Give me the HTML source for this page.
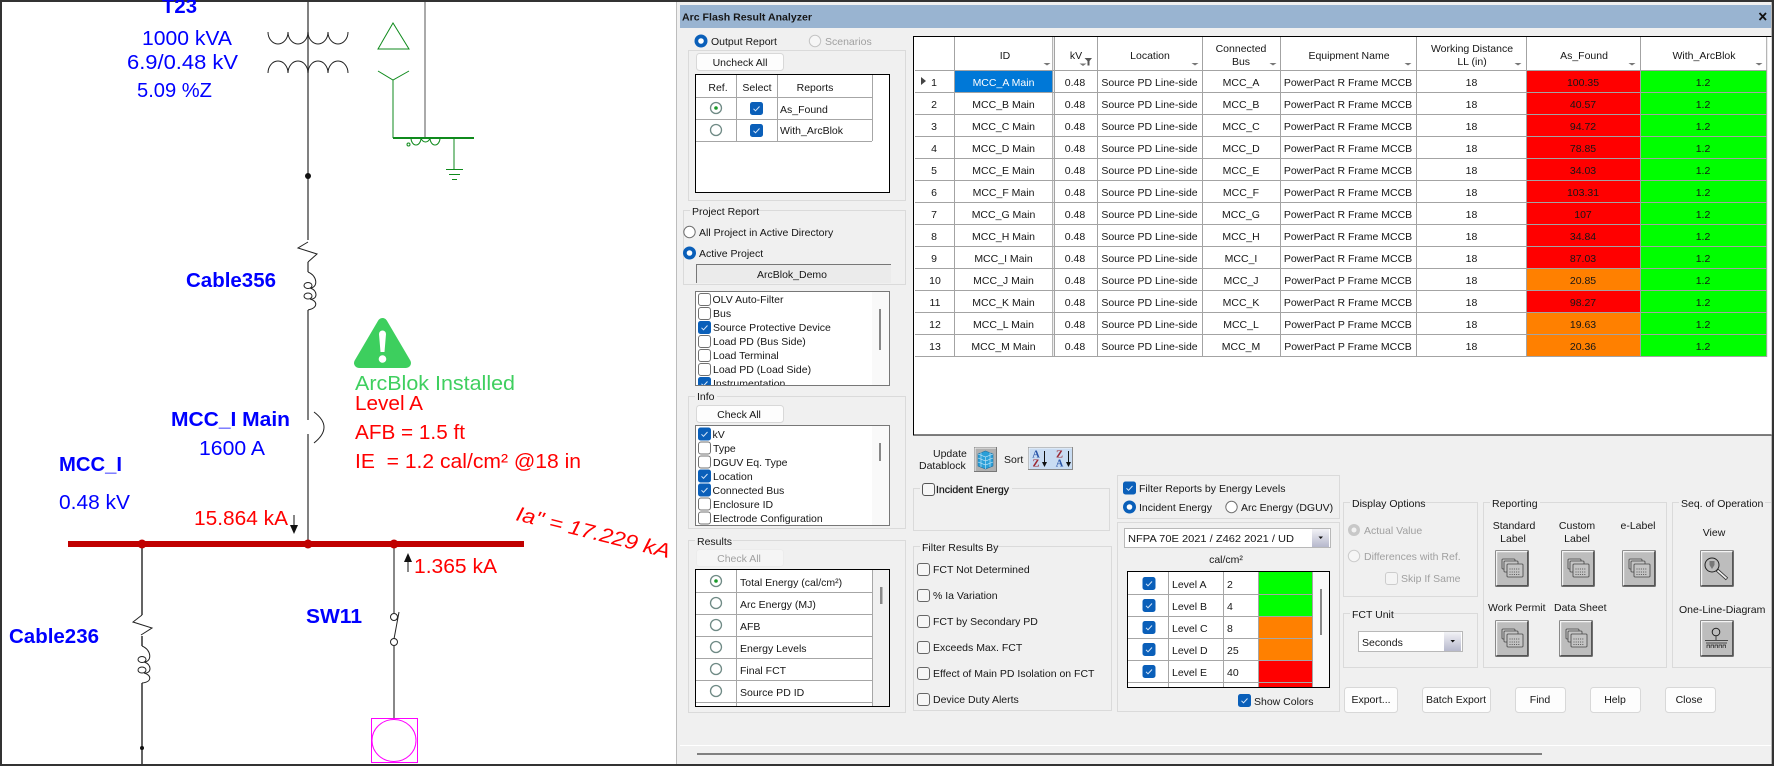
<!DOCTYPE html>
<html><head><meta charset="utf-8"><title>Arc Flash Result Analyzer</title>
<style>
html,body{margin:0;padding:0;background:#333;width:1774px;height:766px;overflow:hidden}
svg{display:block;position:absolute;left:0;top:0}
text{font-family:"Liberation Sans",sans-serif;font-size:10.5px;fill:#161616}
.d text{font-size:20.5px;fill:#0000ff}
.b{font-weight:bold}
.r text{fill:#ff0000}
.g{fill:#a2a2a2}
.gb{fill:none;stroke:#dadada}
.m{text-anchor:middle}
</style></head><body>
<svg width="1774" height="766" viewBox="0 0 1774 766" xmlns="http://www.w3.org/2000/svg">
<defs>
<g id="cb"><rect x="-6.5" y="-6.5" width="13" height="13" rx="2.5" fill="#0a5fb9"/><path d="M-3 0.3L-1 2.3L3 -2" fill="none" stroke="#d8e8fa" stroke-width="1"/></g>
<rect id="ub" x="-6" y="-6" width="12" height="12" rx="2.5" fill="#fff" stroke="#707070"/>
<g id="rb"><circle r="6.5" fill="#0a5fb9"/><circle r="2.8" fill="#fff"/></g>
<circle id="ru" r="5.7" fill="#fff" stroke="#707070"/>
<g id="rg"><circle r="5.5" fill="#fff" stroke="#6f8a85" stroke-width="1.3"/></g>
<g id="rs"><circle r="5.5" fill="#fff" stroke="#6f8a85" stroke-width="1.3"/><circle r="1.8" fill="#1a9a2a"/></g>
<path id="ar" d="M-3.5 0H3.5L0 2.5Z" fill="#777"/>
<g id="btn"><rect x="0" y="0" width="33" height="36" rx="1" fill="#bdbdbd" stroke="#6e6e6e"/><path d="M1 35V1H32" fill="none" stroke="#f4f4f4" stroke-width="1.4"/><path d="M32 1V35H1" fill="none" stroke="#555" stroke-width="1"/></g>
<g id="pg" fill="#c4c4c4" stroke="#444" stroke-width="0.8"><rect x="6.5" y="8.5" width="13" height="10" rx="1"/><rect x="8.5" y="10.5" width="14" height="11" rx="1"/><rect x="11.5" y="13.5" width="16" height="13" rx="1"/><path d="M14 18.5h10M14 21.5h10M14 24h10" stroke="#333" stroke-dasharray="1 1.2" fill="none"/></g>
</defs>

<!-- one-line diagram -->
<rect x="2" y="2" width="675" height="762" fill="#fff"/>
<g fill="none" stroke="#4a4a4a" stroke-width="1.4">
<path d="M308 2V240M308 262V272M308 310V420M308 434V541"/>
<path d="M425 2V138" stroke="#555" stroke-width="1"/>
<path d="M268 32a10 12 0 0 0 20 0a10 12 0 0 0 20 0a10 12 0 0 0 20 0a10 12 0 0 0 20 0M268 73a10 12 0 0 1 20 0a10 12 0 0 1 20 0a10 12 0 0 1 20 0a10 12 0 0 1 20 0" stroke="#222" stroke-width="1"/>
<path d="M308 242L298 248L317 254L308 262" stroke="#222" stroke-width="1"/>
<path d="M308 272C318 276 318 288 310 288C318 290 318 300 310 299C318 301 318 308 308 310" stroke="#222" stroke-width="1"/>
<ellipse cx="308" cy="285.5" rx="4" ry="3" stroke="#222" stroke-width="1"/><ellipse cx="308" cy="296" rx="4" ry="3" stroke="#222" stroke-width="1"/>
<path d="M314 412Q334 427 314 443" stroke="#222" stroke-width="1"/>
<path d="M142 547V615M142 636V646M142 683V764" stroke="#222"/>
<path d="M142 615L133 622L152 628L141 635" stroke="#222" stroke-width="1"/>
<path d="M142 646C152 650 152 662 144 662C152 664 152 674 144 673C152 675 152 682 142 683" stroke="#222" stroke-width="1"/>
<ellipse cx="142" cy="659.5" rx="4" ry="3" stroke="#222" stroke-width="1"/><ellipse cx="142" cy="670" rx="4" ry="3" stroke="#222" stroke-width="1"/>
<path d="M394 547V613M394 646V718" stroke="#555"/>
<ellipse cx="394" cy="617" rx="3.5" ry="3.5" stroke="#222" stroke-width="1"/><ellipse cx="394" cy="642" rx="3.5" ry="3.5" stroke="#222" stroke-width="1"/>
<path d="M399 612L394 639" stroke="#222" stroke-width="1"/>
</g>
<g fill="none" stroke="#0f8a1c" stroke-width="1">
<path d="M393 23L378 49H409Z"/>
<path d="M378 71L393 80L409 71M393 80V138" /><path d="M393 138H474" stroke-width="2"/>
<path d="M411 138a5 7 0 0 0 10 0a5 7 0 0 0 9 0a5 7 0 0 0 10 0"/>
<circle cx="408.5" cy="144.5" r="1.5"/>
<path d="M454 138V169M446 169.5H463M449 174.5H460M452 179.5H457"/>
</g>
<circle cx="308" cy="176" r="3" fill="#111"/><circle cx="142" cy="748" r="2" fill="#111"/>
<rect x="68" y="541" width="456" height="6" fill="#c00000"/>
<circle cx="142" cy="544" r="4.5" fill="#c00000"/><circle cx="308" cy="544" r="4.5" fill="#c00000"/><circle cx="394" cy="544" r="4.5" fill="#c00000"/>
<path d="M294 515V526" stroke="#111"/><path d="M290 525H298L294 534Z" fill="#111"/>
<path d="M408 562V572" stroke="#111"/><path d="M404 562H412L408 553Z" fill="#111"/>
<rect x="371.5" y="718.5" width="46" height="44" fill="none" stroke="#ff00ff"/><ellipse cx="394" cy="740.5" rx="22" ry="21" fill="none" stroke="#ff00ff"/>
<path d="M382.5 323L359 363H406Z" fill="#3dcf5e" stroke="#3dcf5e" stroke-width="10" stroke-linejoin="round"/>
<path d="M379 334a3.5 3.5 0 0 1 7 0L384.5 352H380.5Z" fill="#fff"/><circle cx="382.5" cy="359" r="3.8" fill="#fff"/>
<g class="d">
<text class="b" x="162" y="13" textLength="35" lengthAdjust="spacingAndGlyphs">T23</text>
<text x="142" y="45" textLength="90" lengthAdjust="spacingAndGlyphs">1000 kVA</text>
<text x="127" y="69" textLength="111" lengthAdjust="spacingAndGlyphs">6.9/0.48 kV</text>
<text x="137" y="97" textLength="75" lengthAdjust="spacingAndGlyphs">5.09 %Z</text>
<text class="b" x="186" y="287" textLength="90" lengthAdjust="spacingAndGlyphs">Cable356</text>
<text class="b" x="171" y="426" textLength="119" lengthAdjust="spacingAndGlyphs">MCC_I Main</text>
<text x="199" y="455" textLength="66" lengthAdjust="spacingAndGlyphs">1600 A</text>
<text class="b" x="59" y="471" textLength="63" lengthAdjust="spacingAndGlyphs">MCC_I</text>
<text x="59" y="509" textLength="71" lengthAdjust="spacingAndGlyphs">0.48 kV</text>
<text class="b" x="9" y="643" textLength="90" lengthAdjust="spacingAndGlyphs">Cable236</text>
<text class="b" x="306" y="623" textLength="56" lengthAdjust="spacingAndGlyphs">SW11</text>
<text x="355" y="390" textLength="160" lengthAdjust="spacingAndGlyphs" style="fill:#3fcf5f">ArcBlok Installed</text>
</g>
<g class="d r">
<text x="355" y="410" textLength="68" lengthAdjust="spacingAndGlyphs">Level A</text>
<text x="355" y="439" textLength="110" lengthAdjust="spacingAndGlyphs">AFB = 1.5 ft</text>
<text x="355" y="468" textLength="226" lengthAdjust="spacingAndGlyphs" style="white-space:pre">IE  = 1.2 cal/cm² @18 in</text>
<text x="194" y="525" textLength="94" lengthAdjust="spacingAndGlyphs">15.864 kA</text>
<text x="414" y="573" textLength="83" lengthAdjust="spacingAndGlyphs">1.365 kA</text>
<text transform="translate(515 520) rotate(14)" style="font-style:italic" textLength="158" lengthAdjust="spacingAndGlyphs">Ia" = 17.229 kA</text>
</g>

<!-- window -->
<rect x="677" y="2" width="1094.7" height="762" fill="#f0f0f0"/>
<path d="M676.5 2V764" stroke="#bdbdbd"/>
<rect x="680" y="5" width="1091" height="23" fill="#99b4d1"/>
<text x="682" y="20.5" style="font-weight:bold" textLength="130" lengthAdjust="spacingAndGlyphs">Arc Flash Result Analyzer</text>
<path d="M1759.5 13L1766 20M1766 13L1759.5 20" stroke="#111" stroke-width="1.8"/>
<path d="M680 745.5H1771" stroke="#fff"/><rect x="697" y="753" width="845" height="2" fill="#808080"/>

<!-- Output report -->
<use href="#rb" x="701" y="41"/><text x="711" y="45">Output Report</text>
<circle cx="815" cy="41" r="5.7" fill="#f6f6f6" stroke="#c4c4c4"/><text x="825" y="45" style="fill:#a0a0a0">Scenarios</text>
<rect class="gb" x="688.5" y="50.5" width="217" height="150"/>
<rect x="696.5" y="53.5" width="87" height="17" rx="3" fill="#fdfdfd" stroke="#d8d8d8"/><text class="m" x="740" y="66">Uncheck All</text>
<rect x="695.5" y="74.5" width="194" height="118" fill="#fff" stroke="#000"/>
<path d="M696 97.5H872M696 119.5H872M696 141.5H872M736.5 75V141M777.5 75V141M872.5 75V141" stroke="#a6a6a6" fill="none"/>
<text class="m" x="718" y="91">Ref.</text><text class="m" x="757" y="91">Select</text><text class="m" x="815" y="91">Reports</text>
<use href="#rs" x="716" y="108"/><use href="#rg" x="716" y="130"/>
<use href="#cb" x="756.5" y="108.5"/><use href="#cb" x="756.5" y="130.5"/>
<text x="780" y="113">As_Found</text><text x="780" y="134">With_ArcBlok</text>

<!-- Project report -->
<rect class="gb" x="683.5" y="210.5" width="222" height="74"/>
<rect x="690" y="205" width="64" height="12" fill="#f0f0f0"/><text x="692" y="215">Project Report</text>
<use href="#ru" x="689.5" y="232"/><text x="699" y="236">All Project in Active Directory</text>
<use href="#rb" x="689.5" y="253"/><text x="699" y="257">Active Project</text>
<rect x="696" y="264" width="195" height="19" fill="#ebebeb"/><path d="M696.5 283V264.5H891" fill="none" stroke="#777"/>
<text class="m" x="792" y="278">ArcBlok_Demo</text>

<rect x="695.5" y="291.5" width="194" height="94" fill="#fff" stroke="#777"/>
<rect x="872" y="292" width="17" height="93" fill="#f9f9f9"/><rect x="879" y="309" width="2" height="41" fill="#888"/>
<g><use href="#ub" x="704.5" y="299.5"/><use href="#ub" x="704.5" y="313.5"/><use href="#cb" x="704.5" y="327.5"/><use href="#ub" x="704.5" y="341.5"/><use href="#ub" x="704.5" y="355.5"/><use href="#ub" x="704.5" y="369.5"/></g>
<text x="712.5" y="303">OLV Auto-Filter</text><text x="713" y="317">Bus</text><text x="713" y="331">Source Protective Device</text><text x="713" y="345">Load PD (Bus Side)</text><text x="713" y="359">Load Terminal</text><text x="713" y="373">Load PD (Load Side)</text>
<svg x="696" y="376" width="176" height="9" viewBox="696 376 176 9"><use href="#cb" x="704.5" y="383.5"/><text x="713" y="387">Instrumentation</text></svg>

<!-- Info -->
<rect class="gb" x="688.5" y="396.5" width="217" height="132"/>
<rect x="695" y="391" width="22" height="12" fill="#f0f0f0"/><text x="697" y="400">Info</text>
<rect x="696.5" y="405.5" width="87" height="17" rx="3" fill="#fdfdfd" stroke="#d8d8d8"/><text class="m" x="739" y="418">Check All</text>
<rect x="695.5" y="425.5" width="194" height="100" fill="#fff" stroke="#777"/>
<rect x="872" y="426" width="17" height="99" fill="#f9f9f9"/><rect x="879" y="443" width="2" height="18" fill="#888"/>
<use href="#cb" x="704.5" y="434"/><use href="#ub" x="704.5" y="448"/><use href="#ub" x="704.5" y="462"/><use href="#cb" x="704.5" y="476"/><use href="#cb" x="704.5" y="490"/><use href="#ub" x="704.5" y="504"/><use href="#ub" x="704.5" y="518"/>
<text x="712.5" y="438">kV</text><text x="713" y="452">Type</text><text x="713" y="466">DGUV Eq. Type</text><text x="713" y="480">Location</text><text x="712.5" y="494">Connected Bus</text><text x="713" y="508">Enclosure ID</text><text x="713" y="522">Electrode Configuration</text>

<!-- Results -->
<rect class="gb" x="688.5" y="540.5" width="217" height="172"/>
<rect x="695" y="535" width="38" height="12" fill="#f0f0f0"/><text x="697" y="545">Results</text>
<rect x="696.5" y="549.5" width="87" height="17" rx="3" fill="#f5f5f5" stroke="#ececec"/><text class="m" x="739" y="562" style="fill:#a0a0a0">Check All</text>
<rect x="695.5" y="569.5" width="194" height="137" fill="#fff" stroke="#000"/>
<rect x="872" y="570" width="17" height="136" fill="#f0f0f0"/><rect x="880" y="587" width="2.5" height="17" fill="#888"/>
<path d="M696 592.5H872M696 614.5H872M696 636.5H872M696 658.5H872M696 680.5H872M696 702.5H872M736.5 570V706M872.5 570V706" stroke="#a6a6a6" fill="none"/>
<use href="#rs" x="716" y="581"/><use href="#rg" x="716" y="603"/><use href="#rg" x="716" y="625"/><use href="#rg" x="716" y="647"/><use href="#rg" x="716" y="669"/><use href="#rg" x="716" y="691"/>
<text x="740" y="586">Total Energy (cal/cm²)</text><text x="740" y="608">Arc Energy (MJ)</text><text x="740" y="630">AFB</text><text x="740" y="652">Energy Levels</text><text x="740" y="674">Final FCT</text><text x="740" y="696">Source PD ID</text>

<!-- Main table -->
<rect x="913" y="36" width="858.7" height="399" fill="#fff"/>
<rect x="1527" y="70" width="113.5" height="287" fill="#ff0000"/>
<rect x="1527" y="268.5" width="113.5" height="22" fill="#ff8000"/>
<rect x="1527" y="312.5" width="113.5" height="44" fill="#ff8000"/>
<rect x="1641" y="70" width="125.7" height="287" fill="#00ff00"/>
<rect x="955" y="71" width="97.7" height="21" fill="#0078d7"/>
<path d="M915 70.5H1767M915 92.5H1767M915 114.5H1767M915 136.5H1767M915 158.5H1767M915 180.5H1767M915 202.5H1767M915 224.5H1767M915 246.5H1767M915 268.5H1767M915 290.5H1767M915 312.5H1767M915 334.5H1767M915 356.5H1767M954.5 37V357M1052.7 37V357M1054.5 37V357M1097.5 37V357M1202.5 37V357M1280.5 37V357M1416.5 37V357M1526.5 37V357M1640.5 37V357M1766.7 37V357" stroke="#a3a3a3" fill="none"/>
<path d="M1771.5 36.5H913.5V435H1771.5" fill="none" stroke="#000"/>
<g text-anchor="middle">
<text x="1005" y="59">ID</text><text x="1076" y="59">kV</text><text x="1150" y="59">Location</text><text x="1241" y="52">Connected</text><text x="1241" y="65">Bus</text><text x="1349" y="59">Equipment Name</text><text x="1472" y="52">Working Distance</text><text x="1472" y="65">LL (in)</text><text x="1584" y="59">As_Found</text><text x="1704" y="59">With_ArcBlok</text>
</g>
<use href="#ar" x="1047" y="63"/><use href="#ar" x="1083" y="63.5"/><use href="#ar" x="1195" y="63"/><use href="#ar" x="1273" y="63"/><use href="#ar" x="1408" y="63"/><use href="#ar" x="1518" y="63"/><use href="#ar" x="1632" y="63"/><use href="#ar" x="1759" y="63"/>
<path d="M1084.5 58H1092L1089.5 61V65.5H1087.5V61Z" fill="#555"/>
<path d="M921 77L926 81L921 85Z" fill="#444"/>
<g text-anchor="middle">
<text x="934" y="86">1</text><text x="934" y="108">2</text><text x="934" y="130">3</text><text x="934" y="152">4</text><text x="934" y="174">5</text><text x="934" y="196">6</text><text x="934" y="218">7</text><text x="934" y="240">8</text><text x="934" y="262">9</text><text x="935" y="284">10</text><text x="935" y="306">11</text><text x="935" y="328">12</text><text x="935" y="350">13</text>
<text x="1003.5" y="86" style="fill:#fff">MCC_A Main</text><text x="1003.5" y="108">MCC_B Main</text><text x="1003.5" y="130">MCC_C Main</text><text x="1003.5" y="152">MCC_D Main</text><text x="1003.5" y="174">MCC_E Main</text><text x="1003.5" y="196">MCC_F Main</text><text x="1003.5" y="218">MCC_G Main</text><text x="1003.5" y="240">MCC_H Main</text><text x="1003.5" y="262">MCC_I Main</text><text x="1003.5" y="284">MCC_J Main</text><text x="1003.5" y="306">MCC_K Main</text><text x="1003.5" y="328">MCC_L Main</text><text x="1003.5" y="350">MCC_M Main</text>
<text x="1075" y="86">0.48</text><text x="1075" y="108">0.48</text><text x="1075" y="130">0.48</text><text x="1075" y="152">0.48</text><text x="1075" y="174">0.48</text><text x="1075" y="196">0.48</text><text x="1075" y="218">0.48</text><text x="1075" y="240">0.48</text><text x="1075" y="262">0.48</text><text x="1075" y="284">0.48</text><text x="1075" y="306">0.48</text><text x="1075" y="328">0.48</text><text x="1075" y="350">0.48</text>
<text x="1149.5" y="86">Source PD Line-side</text><text x="1149.5" y="108">Source PD Line-side</text><text x="1149.5" y="130">Source PD Line-side</text><text x="1149.5" y="152">Source PD Line-side</text><text x="1149.5" y="174">Source PD Line-side</text><text x="1149.5" y="196">Source PD Line-side</text><text x="1149.5" y="218">Source PD Line-side</text><text x="1149.5" y="240">Source PD Line-side</text><text x="1149.5" y="262">Source PD Line-side</text><text x="1149.5" y="284">Source PD Line-side</text><text x="1149.5" y="306">Source PD Line-side</text><text x="1149.5" y="328">Source PD Line-side</text><text x="1149.5" y="350">Source PD Line-side</text>
<text x="1241" y="86">MCC_A</text><text x="1241" y="108">MCC_B</text><text x="1241" y="130">MCC_C</text><text x="1241" y="152">MCC_D</text><text x="1241" y="174">MCC_E</text><text x="1241" y="196">MCC_F</text><text x="1241" y="218">MCC_G</text><text x="1241" y="240">MCC_H</text><text x="1241" y="262">MCC_I</text><text x="1241" y="284">MCC_J</text><text x="1241" y="306">MCC_K</text><text x="1241" y="328">MCC_L</text><text x="1241" y="350">MCC_M</text>
<text x="1348" y="86">PowerPact R Frame MCCB</text><text x="1348" y="108">PowerPact R Frame MCCB</text><text x="1348" y="130">PowerPact R Frame MCCB</text><text x="1348" y="152">PowerPact R Frame MCCB</text><text x="1348" y="174">PowerPact R Frame MCCB</text><text x="1348" y="196">PowerPact R Frame MCCB</text><text x="1348" y="218">PowerPact R Frame MCCB</text><text x="1348" y="240">PowerPact R Frame MCCB</text><text x="1348" y="262">PowerPact R Frame MCCB</text><text x="1348" y="284">PowerPact P Frame MCCB</text><text x="1348" y="306">PowerPact R Frame MCCB</text><text x="1348" y="328">PowerPact P Frame MCCB</text><text x="1348" y="350">PowerPact P Frame MCCB</text>
<text x="1471.5" y="86">18</text><text x="1471.5" y="108">18</text><text x="1471.5" y="130">18</text><text x="1471.5" y="152">18</text><text x="1471.5" y="174">18</text><text x="1471.5" y="196">18</text><text x="1471.5" y="218">18</text><text x="1471.5" y="240">18</text><text x="1471.5" y="262">18</text><text x="1471.5" y="284">18</text><text x="1471.5" y="306">18</text><text x="1471.5" y="328">18</text><text x="1471.5" y="350">18</text>
<text x="1583" y="86">100.35</text><text x="1583" y="108">40.57</text><text x="1583" y="130">94.72</text><text x="1583" y="152">78.85</text><text x="1583" y="174">34.03</text><text x="1583" y="196">103.31</text><text x="1583" y="218">107</text><text x="1583" y="240">34.84</text><text x="1583" y="262">87.03</text><text x="1583" y="284">20.85</text><text x="1583" y="306">98.27</text><text x="1583" y="328">19.63</text><text x="1583" y="350">20.36</text>
<text x="1703" y="86">1.2</text><text x="1703" y="108">1.2</text><text x="1703" y="130">1.2</text><text x="1703" y="152">1.2</text><text x="1703" y="174">1.2</text><text x="1703" y="196">1.2</text><text x="1703" y="218">1.2</text><text x="1703" y="240">1.2</text><text x="1703" y="262">1.2</text><text x="1703" y="284">1.2</text><text x="1703" y="306">1.2</text><text x="1703" y="328">1.2</text><text x="1703" y="350">1.2</text>
</g>

<!-- Update / sort -->
<text x="933" y="457">Update</text><text x="919" y="469">Datablock</text>
<rect x="974.5" y="447.5" width="22" height="24" fill="#b0b0b0" stroke="#777"/><path d="M975 471V448H996" fill="none" stroke="#f2f2f2"/>
<path d="M985.5 451L993 454V466L985.5 469L978 466V454Z" fill="#2a9fd8" stroke="#1f6f9f" stroke-width="0.6"/><path d="M978 454L985.5 457L993 454M985.5 457V469M978 458L985.5 461L993 458M978 462L985.5 465L993 462M981 452.5V467M990 452.5V467" fill="none" stroke="#cdeaf8" stroke-width="0.6"/>
<text x="1004" y="463">Sort</text>
<rect x="1028.5" y="447.5" width="44" height="22" fill="#c9dcf2" stroke="#8a8a8a"/><path d="M1029 469V448H1072" fill="none" stroke="#eef4fb"/>
<text x="1036" y="457.5" text-anchor="middle" style="font-family:'Liberation Serif',serif;font-weight:bold;font-size:10.5px;fill:#2a55a8">A</text>
<text x="1036" y="466.5" text-anchor="middle" style="font-family:'Liberation Serif',serif;font-weight:bold;font-size:10.5px;fill:#9c2a35">Z</text>
<text x="1059.5" y="457.5" text-anchor="middle" style="font-family:'Liberation Serif',serif;font-weight:bold;font-size:10.5px;fill:#9c2a35">Z</text>
<text x="1059.5" y="466.5" text-anchor="middle" style="font-family:'Liberation Serif',serif;font-weight:bold;font-size:10.5px;fill:#2a55a8">A</text>
<path d="M1044.5 451V463M1068.5 451V463" stroke="#111"/><path d="M1042 462H1047L1044.5 467ZM1066 462H1071L1068.5 467Z" fill="#111"/>

<!-- Incident Energy -->
<rect class="gb" x="913.5" y="488.5" width="196" height="42"/>
<rect x="920" y="483" width="92" height="12" fill="#f0f0f0"/><rect x="922.5" y="483.5" width="12" height="12" rx="2.5" fill="#f6f6f6" stroke="#555"/>
<text x="936" y="493" style="stroke:#161616;stroke-width:.25">Incident Energy</text>

<!-- Filter results -->
<rect class="gb" x="913.5" y="546.5" width="198" height="164"/>
<rect x="920" y="541" width="74" height="12" fill="#f0f0f0"/><text x="922" y="551">Filter Results By</text>
<rect x="917.5" y="563.5" width="12" height="12" rx="2.5" fill="#f6f6f6" stroke="#666"/><rect x="917.5" y="589.5" width="12" height="12" rx="2.5" fill="#f6f6f6" stroke="#666"/><rect x="917.5" y="615.5" width="12" height="12" rx="2.5" fill="#f6f6f6" stroke="#666"/><rect x="917.5" y="641.5" width="12" height="12" rx="2.5" fill="#f6f6f6" stroke="#666"/><rect x="917.5" y="667.5" width="12" height="12" rx="2.5" fill="#f6f6f6" stroke="#666"/><rect x="917.5" y="693.5" width="12" height="12" rx="2.5" fill="#f6f6f6" stroke="#666"/>
<text x="933" y="573">FCT Not Determined</text><text x="933" y="599">% Ia Variation</text><text x="933" y="625">FCT by Secondary PD</text><text x="933" y="651">Exceeds Max. FCT</text><text x="933" y="677">Effect of Main PD Isolation on FCT</text><text x="933" y="703">Device Duty Alerts</text>

<!-- Filter reports -->
<rect class="gb" x="1117.5" y="475.5" width="222" height="43"/>
<use href="#cb" x="1129.5" y="488"/><text x="1139" y="492">Filter Reports by Energy Levels</text>
<use href="#rb" x="1129.5" y="507"/><text x="1139" y="511">Incident Energy</text>
<use href="#ru" x="1231.5" y="507"/><text x="1241" y="511">Arc Energy (DGUV)</text>
<rect class="gb" x="1117.5" y="522.5" width="222" height="189"/>
<rect x="1124.5" y="528.5" width="206" height="19" fill="#fff" stroke="#b8b8b8"/>
<text x="1128" y="542" textLength="166" lengthAdjust="spacingAndGlyphs">NFPA 70E 2021 / Z462 2021 / UD</text>
<defs><linearGradient id="dd" x1="0" y1="0" x2="0" y2="1"><stop offset="0" stop-color="#f2f2f6"/><stop offset="1" stop-color="#b6b8cc"/></linearGradient></defs>
<rect x="1312" y="529" width="17" height="18" fill="url(#dd)"/><path d="M1318.5 536.5H1323L1320.7 539Z" fill="#111"/>
<text x="1226" y="563" text-anchor="middle">cal/cm²</text>
<rect x="1127.5" y="571.5" width="202" height="116" fill="#fff" stroke="#000"/>
<rect x="1258" y="572" width="54" height="44.5" fill="#00ff00"/><rect x="1258" y="616.5" width="54" height="44" fill="#ff8000"/><rect x="1258" y="660.5" width="54" height="26.5" fill="#ff0000"/>
<rect x="1312" y="572" width="17" height="115" fill="#f9f9f9"/><rect x="1320" y="589" width="2" height="46" fill="#888"/>
<path d="M1128 594.5H1312M1128 616.5H1312M1128 638.5H1312M1128 660.5H1312M1128 682.5H1312M1168.5 572V687M1223.5 572V687M1258.5 572V687M1312.5 572V687" stroke="#a6a6a6" fill="none"/>
<use href="#cb" x="1149" y="583.5"/><use href="#cb" x="1149" y="605.5"/><use href="#cb" x="1149" y="627.5"/><use href="#cb" x="1149" y="649.5"/><use href="#cb" x="1149" y="671.5"/>
<text x="1172" y="588">Level A</text><text x="1172" y="610">Level B</text><text x="1172" y="632">Level C</text><text x="1172" y="654">Level D</text><text x="1172" y="676">Level E</text>
<text x="1227" y="588">2</text><text x="1227" y="610">4</text><text x="1227" y="632">8</text><text x="1227" y="654">25</text><text x="1227" y="676">40</text>
<use href="#cb" x="1244.5" y="700.5"/><text x="1254" y="705">Show Colors</text>

<!-- Display options -->
<rect class="gb" x="1343.5" y="502.5" width="134" height="94"/>
<rect x="1350" y="497" width="66" height="12" fill="#f0f0f0"/><text x="1352" y="507">Display Options</text>
<circle cx="1354" cy="530" r="6" fill="#c8c8c8"/><circle cx="1354" cy="530" r="2.5" fill="#f2f2f2"/><text x="1364" y="534" style="fill:#a0a0a0">Actual Value</text>
<circle cx="1354" cy="556" r="5.7" fill="#f6f6f6" stroke="#cccccc"/><text x="1364" y="560" style="fill:#a0a0a0">Differences with Ref.</text>
<rect x="1385.5" y="572.5" width="12" height="12" rx="2.5" fill="#f4f4f4" stroke="#cccccc"/><text x="1401" y="582" style="fill:#a0a0a0">Skip If Same</text>

<rect class="gb" x="1343.5" y="613.5" width="134" height="54"/>
<rect x="1350" y="608" width="42" height="12" fill="#f0f0f0"/><text x="1352" y="618">FCT Unit</text>
<rect x="1358.5" y="631.5" width="104" height="20" fill="#fff" stroke="#b8b8b8"/><text x="1362" y="646">Seconds</text>
<rect x="1444" y="632" width="17" height="19" fill="url(#dd)"/><path d="M1450.5 640H1455L1452.7 642.5Z" fill="#111"/>

<!-- Reporting -->
<rect class="gb" x="1483.5" y="502.5" width="183" height="165"/>
<rect x="1490" y="497" width="50" height="12" fill="#f0f0f0"/><text x="1492" y="507">Reporting</text>
<g text-anchor="middle"><text x="1514" y="529">Standard</text><text x="1513" y="542">Label</text><text x="1577" y="529">Custom</text><text x="1577" y="542">Label</text><text x="1638" y="529">e-Label</text></g>
<use href="#btn" x="1495.5" y="550.5"/><use href="#pg" x="1495.5" y="550.5"/>
<use href="#btn" x="1561.5" y="550.5"/><use href="#pg" x="1561.5" y="550.5"/>
<use href="#btn" x="1622.5" y="550.5"/><use href="#pg" x="1622.5" y="550.5"/>
<text x="1488" y="611">Work Permit</text><text x="1554" y="611">Data Sheet</text>
<use href="#btn" x="1495.5" y="620.5"/><use href="#pg" x="1495.5" y="620.5"/>
<use href="#btn" x="1559.5" y="620.5"/><use href="#pg" x="1559.5" y="620.5"/>

<!-- Seq -->
<path d="M1679 502.5H1672.5V667.5H1771M1765 502.5H1771" fill="none" stroke="#dadada"/>
<text x="1681" y="507">Seq. of Operation</text>
<text x="1714" y="536" text-anchor="middle">View</text>
<use href="#btn" x="1700.5" y="550.5"/>
<path d="M1717 570L1727 579" stroke="#333" stroke-width="3.5"/><path d="M1717.5 570.5L1726.5 578.5" stroke="#eee" stroke-width="1.8"/>
<circle cx="1712" cy="565" r="7" fill="none" stroke="#222"/><path d="M1709.5 561H1714.5V565L1712 569L1709.5 565Z" fill="#777"/>
<text x="1679" y="613">One-Line-Diagram</text>
<use href="#btn" x="1700.5" y="620.5"/>
<circle cx="1716" cy="632" r="3.8" fill="none" stroke="#222"/><path d="M1716 636V640M1705 640.5H1728M1706 643H1727" stroke="#222" stroke-width="0.8" fill="none"/>
<path d="M1707 648v-3h2.5v3M1711 648v-3h2.5v3M1715 648v-3h2.5v3M1719 648v-3h2.5v3M1723 648v-3h2.5v3" stroke="#222" stroke-width="0.7" fill="none"/>

<!-- bottom buttons -->
<g fill="#fdfdfd" stroke="#d8d8d8"><rect x="1344.5" y="687.5" width="53" height="25" rx="3"/><rect x="1422.5" y="687.5" width="68" height="25" rx="3"/><rect x="1515.5" y="687.5" width="50" height="25" rx="3"/><rect x="1590.5" y="687.5" width="50" height="25" rx="3"/><rect x="1665.5" y="687.5" width="50" height="25" rx="3"/></g>
<g text-anchor="middle"><text x="1371" y="703">Export...</text><text x="1456" y="703">Batch Export</text><text x="1540" y="703">Find</text><text x="1615" y="703">Help</text><text x="1689" y="703">Close</text></g>
</svg>
</body></html>
